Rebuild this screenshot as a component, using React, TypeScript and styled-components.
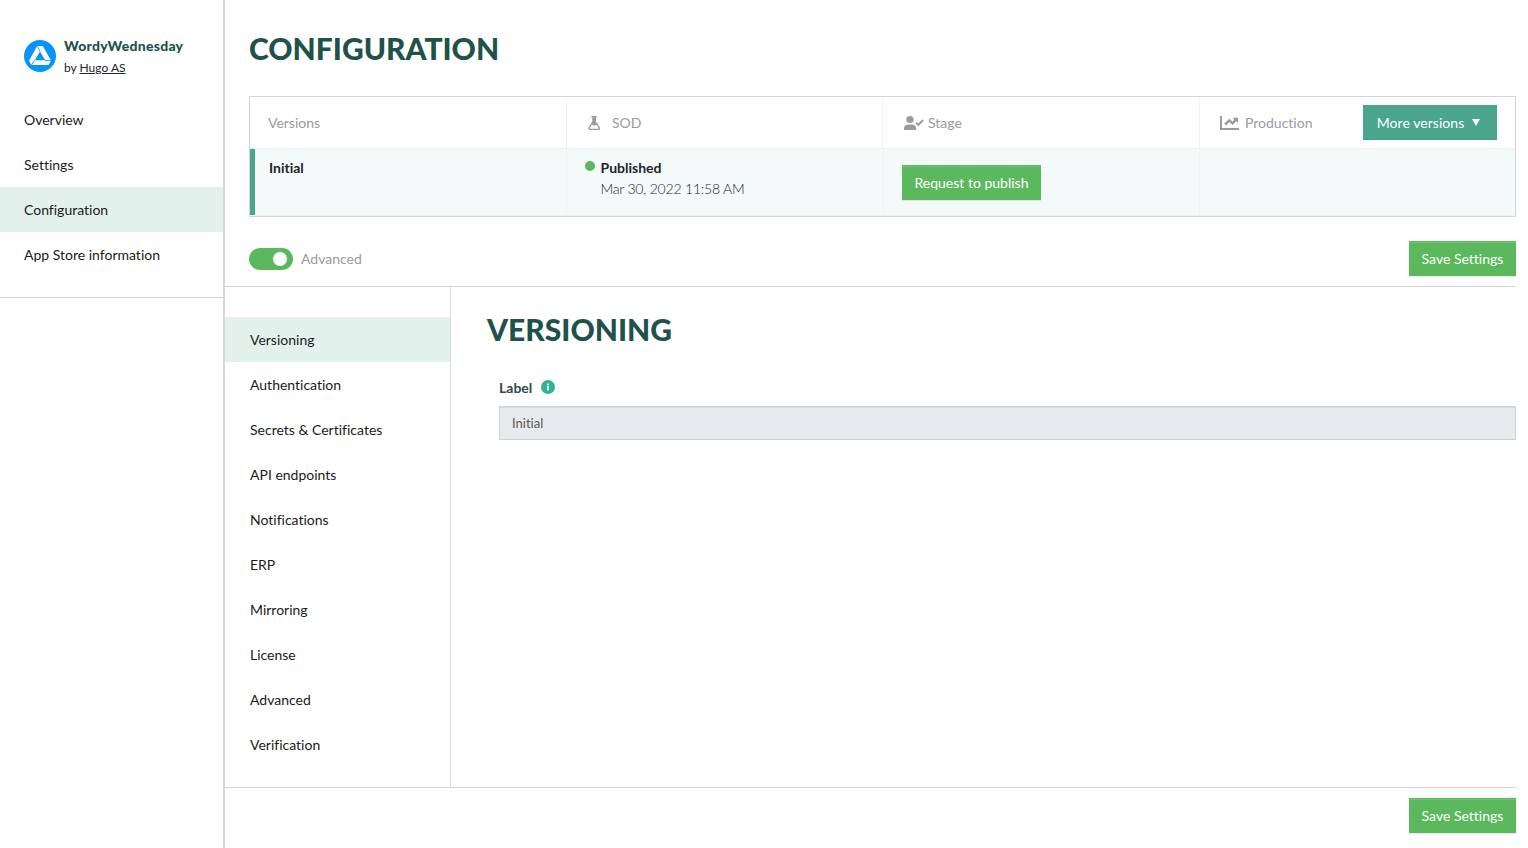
import React from "react";
import styled, { createGlobalStyle } from "styled-components";

const Global = createGlobalStyle`
  * { box-sizing: border-box; }
  body {
    margin: 0;
    background: #fff;
    color: #212529;
    font: 400 14px/21px Lato, "Liberation Sans", sans-serif;
    font-variant-ligatures: none;
  }
  h1, h2, p { margin: 0; }
`;

const Page = styled.div`
  display: flex;
  height: 848px;
  padding-right: 12px;
  overflow: hidden;
`;

const Sidebar = styled.aside`
  flex: 0 0 225px;
  border-right: 2px solid #d8d8d8;
`;

const AppHeader = styled.div`
  display: flex;
  gap: 8px;
  height: 97px;
  padding: 35px 0 0 24px;
`;

const Logo = styled.svg`
  width: 32px;
  height: 32px;
  margin-top: 5px;
`;

const AppName = styled.div`
  color: #1f524b;
  font-weight: 900;
  letter-spacing: 0.25px;
`;

const AppOwner = styled.div`
  margin-top: 1px;
  font-size: 12px;
`;

const OwnerLink = styled.a`
  color: inherit;
  text-decoration: underline;
`;

const MainNav = styled.nav`
  height: 201px;
  border-bottom: 1px solid #d5d5d5;
`;

const NavItem = styled.div<{ $active?: boolean }>`
  height: 45px;
  padding-left: 24px;
  line-height: 46px;
  color: #1b1b1b;
  background: ${(p) => (p.$active ? "#e3f1ec" : "transparent")};
`;

const SubNavItem = styled(NavItem)`
  padding-left: 25px;
`;

const Main = styled.main`
  flex: 1;
  display: flex;
  flex-direction: column;
  min-width: 0;
`;

const Title = styled.h1`
  height: 96px;
  padding: 30px 0 0 24px;
  font-size: 30px;
  line-height: 36px;
  font-weight: 900;
  color: #1f524b;
`;

const Table = styled.div`
  height: 121px;
  margin-left: 24px;
  border: 1px solid #d5d5d5;
`;

const HeadRow = styled.div`
  display: grid;
  grid-template-columns: 317px 316px 317px 1fr;
  height: 52px;
  border-bottom: 1px solid #f1f3f3;
  color: #9b9b9b;
`;

const BodyRow = styled.div`
  display: grid;
  grid-template-columns: 317px 317px 316px 1fr;
  height: 67px;
  background: #f4fafa;
  border-bottom: 1px solid #f1f3f3;
`;

const HeadCell = styled.div<{ $pad: number; $gap?: number }>`
  display: flex;
  align-items: center;
  gap: ${(p) => p.$gap ?? 0}px;
  padding-left: ${(p) => p.$pad}px;
  border-right: 1px solid #f1f3f3;
  &:last-child { border-right: 0; padding-right: 18px; }
`;

const HeadIcon = styled.svg`
  flex: none;
  margin-top: 1px;
  fill: #9b9b9b;
`;

const Cell = styled.div`
  display: flex;
  border-right: 1px solid #f0f3f3;
  padding: 8px 0 0 18px;
  &:first-child { border-left: 5px solid #49a68c; padding-left: 14px; }
  &:last-child { border-right: 0; }
`;

const Strong = styled.div`
  font-weight: 700;
`;

const Dot = styled.span`
  width: 10px;
  height: 10px;
  margin: 4px 5.5px 0 0;
  border-radius: 50%;
  background: #5cb85c;
`;

const DateText = styled.div`
  font-weight: 300;
  letter-spacing: -0.2px;
`;

const Button = styled.button<{ $teal?: boolean; $width: number }>`
  display: flex;
  align-items: center;
  justify-content: center;
  gap: 8px;
  width: ${(p) => p.$width}px;
  height: 35px;
  padding: 0;
  border: 0;
  color: #fff;
  font: 400 14px/21px Lato, "Liberation Sans", sans-serif;
  font-variant-ligatures: none;
  background: ${(p) => (p.$teal ? "#49a68c" : "#5cb85c")};
  box-shadow: ${(p) =>
    p.$teal
      ? "inset 0 -1px 0 #439c83"
      : "inset 0 1px 0 #5cb85c, inset 0 2px 0 #74c274, 0 1px 1px rgba(0,0,0,.075)"};
`;

const MoreButton = styled(Button)`
  margin: 0 0 1px auto;
  padding: 1px 3px 0 0;
  letter-spacing: 0.05px;
`;

const RequestButton = styled(Button)`
  margin-top: 8px;
`;

const Toolbar = styled.div`
  display: flex;
  align-items: flex-start;
  justify-content: space-between;
  height: 70px;
  padding: 24px 0 0 24px;
  border-bottom: 1px solid #d5d5d5;
`;

const ToggleLabel = styled.label`
  display: flex;
  align-items: center;
  gap: 8px;
  height: 35px;
  color: #9b9b9b;
`;

const Toggle = styled.span`
  display: flex;
  align-items: center;
  justify-content: flex-end;
  width: 44px;
  height: 22px;
  margin-top: 1px;
  padding-right: 6px;
  border-radius: 11px;
  background: #5cb85c;
`;

const Knob = styled.span`
  width: 14px;
  height: 14px;
  border-radius: 50%;
  background: #fff;
`;

const Body = styled.div`
  display: flex;
  height: 501px;
  border-bottom: 1px solid #d5d5d5;
`;

const SubNav = styled.nav`
  flex: 0 0 226px;
  padding-top: 30px;
  border-right: 1px solid #dcdcdc;
`;

const Panel = styled.section`
  flex: 1;
  padding: 24px 0 0 36px;
`;

const PanelTitle = styled.h2`
  font-size: 30px;
  line-height: 36px;
  font-weight: 900;
  color: #1f524b;
`;

const Field = styled.div`
  padding: 30px 0 0 12px;
`;

const FieldLabel = styled.label`
  display: flex;
  align-items: center;
  gap: 9px;
  height: 21px;
  font-weight: 700;
  color: #2b4a48;
`;

const InfoIcon = styled.svg`
  width: 14px;
  height: 14px;
  margin-top: -2px;
`;

const Input = styled.input`
  display: block;
  width: 100%;
  height: 34px;
  margin-top: 8px;
  padding: 0 12px;
  border: 1px solid #cdd2d6;
  border-radius: 0;
  background: #e7ebee;
  color: #555;
  font: 400 13px Lato, "Liberation Sans", sans-serif;
  font-variant-ligatures: none;
  box-shadow: inset 0 1px 1px rgba(0, 0, 0, 0.075);
`;

const Footer = styled.footer`
  display: flex;
  justify-content: flex-end;
  padding-top: 10px;
`;

const sections = [
  "Versioning",
  "Authentication",
  "Secrets & Certificates",
  "API endpoints",
  "Notifications",
  "ERP",
  "Mirroring",
  "License",
  "Advanced",
  "Verification",
];

const pages = ["Overview", "Settings", "Configuration", "App Store information"];

export default function App() {
  return (
    <>
      <Global />
      <Page>
        <Sidebar>
          <AppHeader>
            <Logo viewBox="0 0 32 32">
              <circle cx="16" cy="16" r="16" fill="#0596f7" />
              <path d="M13.2 6h5.600L27 20.500 24.600 25H7.500L5 20.700z" fill="#fff" />
              <path d="M16 11.500l5.200 8.700H10.800z" fill="#0596f7" />
              <path
                d="M13.300 6.200L16.200 11.600M27 20.500H21M7.600 24.900L10.700 20"
                stroke="#0596f7"
                strokeWidth="0.8"
                fill="none"
              />
            </Logo>
            <div>
              <AppName>WordyWednesday</AppName>
              <AppOwner>
                by <OwnerLink>Hugo AS</OwnerLink>
              </AppOwner>
            </div>
          </AppHeader>
          <MainNav>
            {pages.map((p) => (
              <NavItem key={p} $active={p === "Configuration"}>{p}</NavItem>
            ))}
          </MainNav>
        </Sidebar>
        <Main>
          <Title>CONFIGURATION</Title>
          <Table>
            <HeadRow>
              <HeadCell $pad={18}>Versions</HeadCell>
              <HeadCell $pad={21} $gap={11}>
                <HeadIcon width="13" height="14" viewBox="0 0 13 14">
                  <path
                    fillRule="evenodd"
                    d="M3.400 0h5.400v1.300H8v4.100l3.900 6.200c.7 1.200.1 2.400-1.200 2.400H1.800C.5 14-.1 12.800.6 11.600L4.300 5.400V1.300h-.9zM3.900 8.700l-2 3.300c-.2.400 0 .7.400.7h8c.4 0 .6-.3.400-.7L9.300 9.800 7.800 8.700 6.200 9.800z"
                  />
                </HeadIcon>
                SOD
              </HeadCell>
              <HeadCell $pad={21} $gap={4}>
                <HeadIcon width="20" height="14" viewBox="0 0 20 14">
                  <ellipse cx="6" cy="3.500" rx="3.700" ry="3.500" />
                  <path d="M0 14v-1.500C0 10 1.700 8.400 4 8.400h4.200c2.300 0 4 1.600 4 4.100V14z" />
                  <path d="M18.300 3.300l1.500 1.400-5.400 5.500-3-2.800 1.400-1.400 1.600 1.400z" />
                </HeadIcon>
                Stage
              </HeadCell>
              <HeadCell $pad={20} $gap={6}>
                <HeadIcon width="19" height="14" viewBox="0 0 19 14">
                  <path d="M0 0h2v12h17v2H0zM12.500 1.800H18v5l-1.700-1.600-3.800 3.900-3-3-3.400 3.300-1.900-1.900L9.500 2.700l3 3 1.700-1.900z" />
                </HeadIcon>
                Production
                <MoreButton $teal $width={134}>
                  More versions
                  <svg width="8" height="7" viewBox="0 0 8 7">
                    <path d="M0 0h8L4 7z" fill="#fff" />
                  </svg>
                </MoreButton>
              </HeadCell>
            </HeadRow>
            <BodyRow>
              <Cell>
                <Strong>Initial</Strong>
              </Cell>
              <Cell>
                <Dot />
                <div>
                  <Strong>Published</Strong>
                  <DateText>Mar 30, 2022 11:58 AM</DateText>
                </div>
              </Cell>
              <Cell>
                <RequestButton $width={139}>Request to publish</RequestButton>
              </Cell>
              <Cell />
            </BodyRow>
          </Table>
          <Toolbar>
            <ToggleLabel>
              <Toggle>
                <Knob />
              </Toggle>
              Advanced
            </ToggleLabel>
            <Button $width={107}>Save Settings</Button>
          </Toolbar>
          <Body>
            <SubNav>
              {sections.map((s) => (
                <SubNavItem key={s} $active={s === "Versioning"}>{s}</SubNavItem>
              ))}
            </SubNav>
            <Panel>
              <PanelTitle>VERSIONING</PanelTitle>
              <Field>
                <FieldLabel>
                  Label
                  <InfoIcon viewBox="0 0 14 14">
                    <circle cx="7" cy="7" r="7" fill="#2fb594" />
                    <path d="M6.200 3.500h1.600v1.400H6.200zM5.900 5.800h1.900v4.600H6.200V6.800h-.3z" fill="#fff" />
                  </InfoIcon>
                </FieldLabel>
                <Input readOnly value="Initial" />
              </Field>
            </Panel>
          </Body>
          <Footer>
            <Button $width={107}>Save Settings</Button>
          </Footer>
        </Main>
      </Page>
    </>
  );
}
